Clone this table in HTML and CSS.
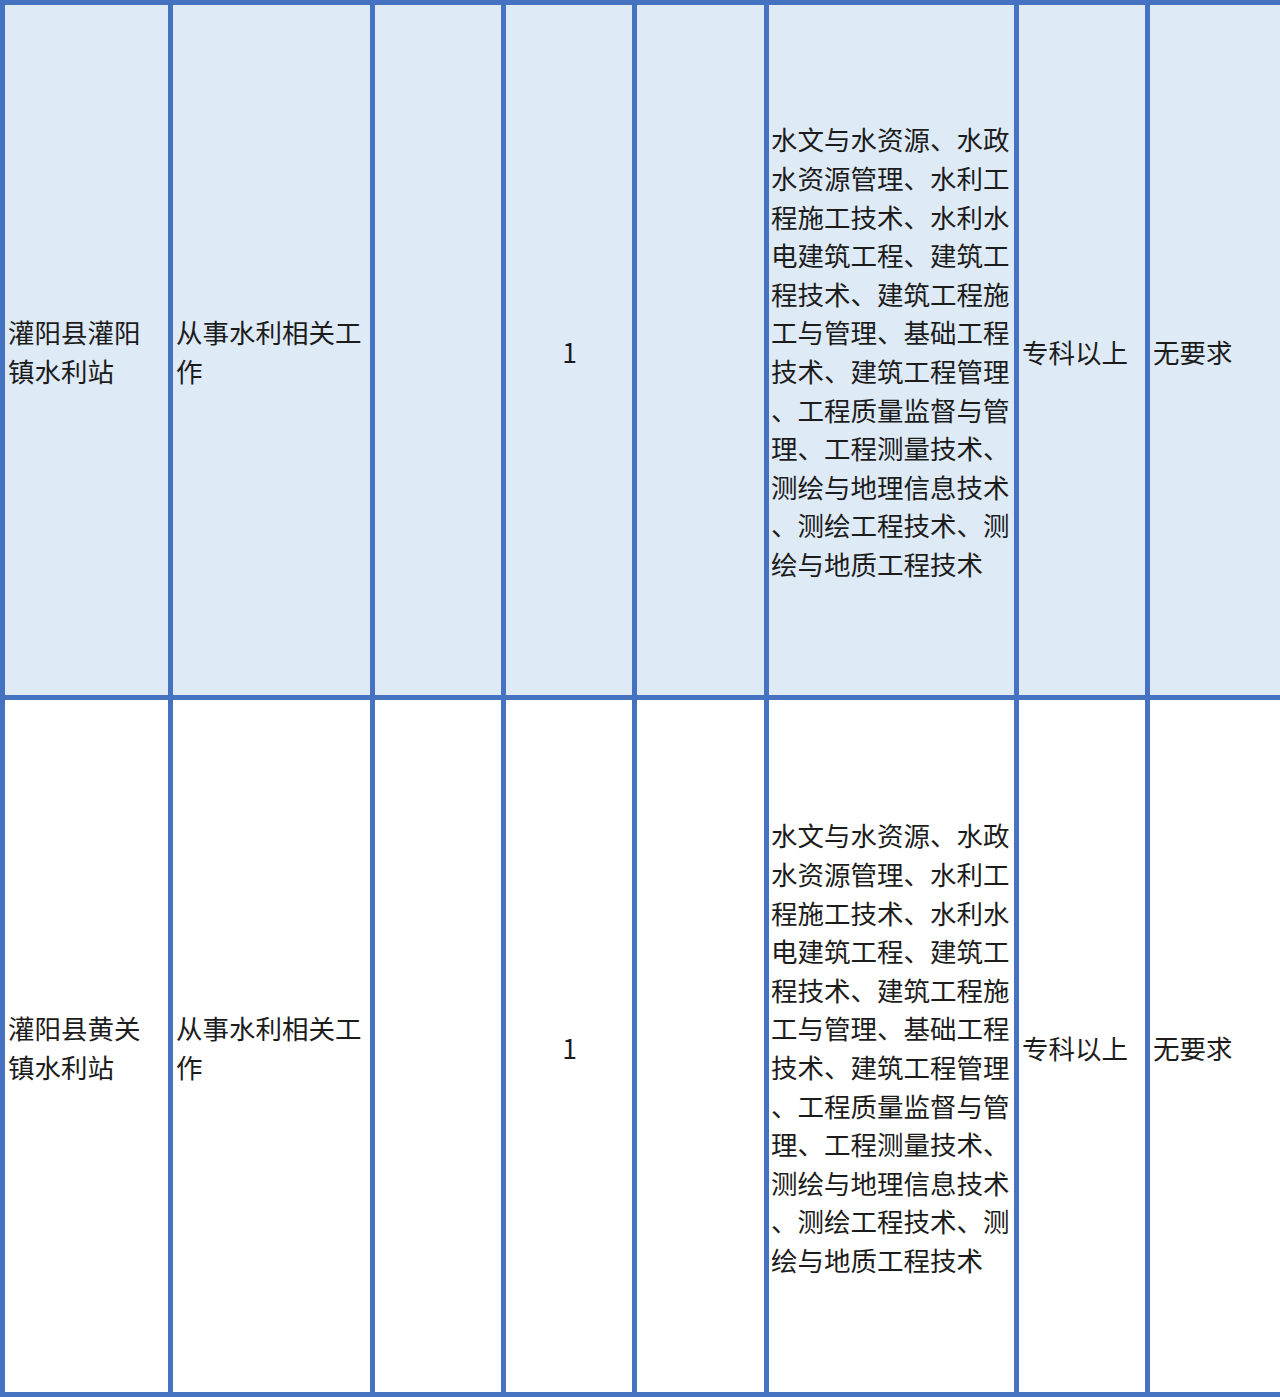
FILE: index.html
```html
<!DOCTYPE html>
<html lang="zh-CN">
<head>
<meta charset="utf-8">
<title>岗位表</title>
<link rel="stylesheet" href="styles.css">
</head>
<body>
<table class="sheet">
  <colgroup>
    <col class="c1"><col class="c2"><col class="c3"><col class="c4"><col class="c5"><col class="c6"><col class="c7"><col class="c8">
  </colgroup>
  <tbody>
    <tr class="row row-blue">
      <td class="cell">灌阳县灌阳<br>镇水利站</td>
      <td class="cell">从事水利相关工<br>作</td>
      <td class="cell"></td>
      <td class="cell center">1</td>
      <td class="cell"></td>
      <td class="cell major">水文与水资源、水政<br>水资源管理、水利工<br>程施工技术、水利水<br>电建筑工程、建筑工<br>程技术、建筑工程施<br>工与管理、基础工程<br>技术、建筑工程管理<br>、工程质量监督与管<br>理、工程测量技术、<br>测绘与地理信息技术<br>、测绘工程技术、测<br>绘与地质工程技术</td>
      <td class="cell">专科以上</td>
      <td class="cell">无要求</td>
    </tr>
    <tr class="row row-white">
      <td class="cell">灌阳县黄关<br>镇水利站</td>
      <td class="cell">从事水利相关工<br>作</td>
      <td class="cell"></td>
      <td class="cell center">1</td>
      <td class="cell"></td>
      <td class="cell major">水文与水资源、水政<br>水资源管理、水利工<br>程施工技术、水利水<br>电建筑工程、建筑工<br>程技术、建筑工程施<br>工与管理、基础工程<br>技术、建筑工程管理<br>、工程质量监督与管<br>理、工程测量技术、<br>测绘与地理信息技术<br>、测绘工程技术、测<br>绘与地质工程技术</td>
      <td class="cell">专科以上</td>
      <td class="cell">无要求</td>
    </tr>
  </tbody>
</table>
</body>
</html>
```

FILE: styles.css
```css
html, body {
  margin: 0;
  padding: 0;
  background: #ffffff;
}

.sheet {
  width: 1280px;
  border-collapse: collapse;
  table-layout: fixed;
  font-family: "Noto Sans CJK SC", "Noto Sans", sans-serif;
  font-size: 26.5px;
  line-height: 38.6px;
  color: #1c1c1c;
}

.c1 { width: 168px; }
.c2 { width: 202px; }
.c3 { width: 131px; }
.c4 { width: 131px; }
.c5 { width: 132px; }
.c6 { width: 250px; }
.c7 { width: 131px; }
.c8 { width: 135px; }

.cell {
  border: 5px solid #4672c2;
  padding: 4px 2px 0 3px;
  vertical-align: middle;
  text-align: left;
  white-space: nowrap;
  overflow: hidden;
}

.row-blue {
  height: 695px;
  background: #deeaf6;
}

.row-white {
  height: 697px;
  background: #ffffff;
}

.center {
  text-align: center;
}

.major {
  padding-left: 2px;
  padding-right: 0;
}
```
